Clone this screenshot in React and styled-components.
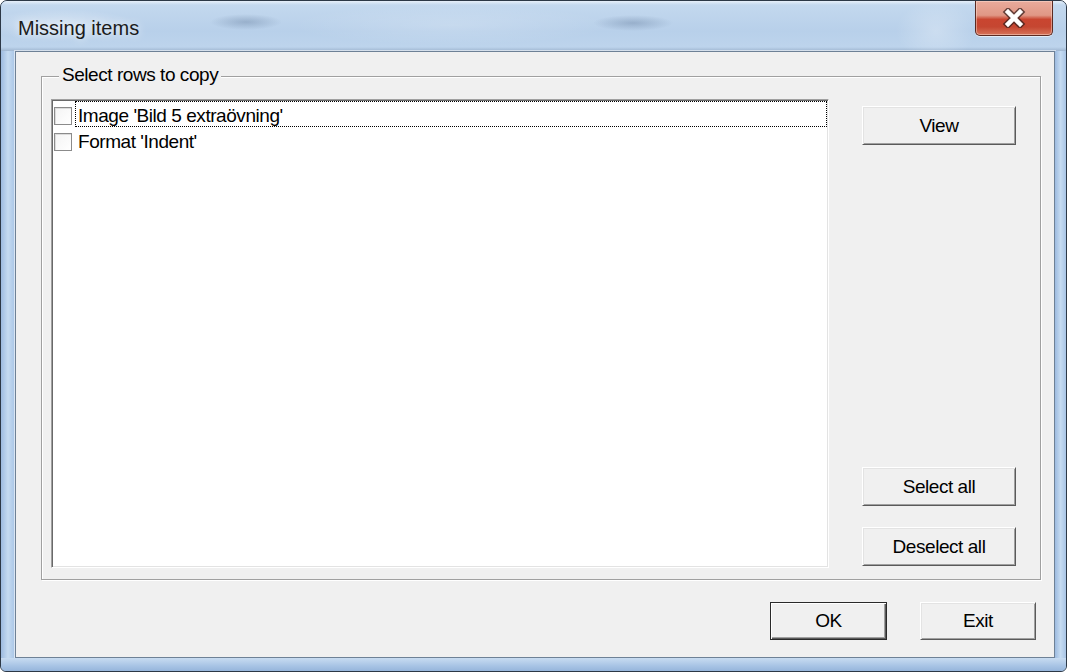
import styled, { createGlobalStyle } from 'styled-components'

const UI_FONT = `"Liberation Sans", Arial, sans-serif`

const GlobalStyle = createGlobalStyle`
  html, body {
    margin: 0;
    padding: 0;
    background: #ffffff;
  }
  body {
    width: 1067px;
    height: 672px;
    overflow: hidden;
  }
`

const Window = styled.div`
  box-sizing: border-box;
  width: 1067px;
  height: 672px;
  display: flex;
  flex-direction: column;
  border: 1px solid #2c3846;
  border-radius: 7px 7px 6px 6px;
  overflow: hidden;
  background: linear-gradient(90deg, #a4c1e3 0%, #bed5ee 45%, #b1cbe8 100%);
`

const TitleBar = styled.div`
  height: 50px;
  flex: none;
  display: flex;
  justify-content: space-between;
  align-items: flex-start;
  background:
    radial-gradient(ellipse 36px 8px at 245px 21px, rgba(70, 95, 130, 0.3), transparent),
    radial-gradient(ellipse 40px 8px at 632px 22px, rgba(70, 95, 130, 0.3), transparent),
    radial-gradient(ellipse 75px 16px at 60px 24px, rgba(255, 255, 255, 0.4), transparent),
    radial-gradient(ellipse 160px 20px at 450px 24px, rgba(255, 255, 255, 0.18), transparent),
    radial-gradient(ellipse 40px 30px at 935px 30px, rgba(255, 255, 255, 0.28), transparent),
    linear-gradient(180deg, #e6eff9 0px, #c3d8ee 4px, #b8d0ea 60%, #bdd4ec 92%, #9fb6d0 100%);
`

const Title = styled.div`
  padding: 15px 0 0 17px;
  font-family: "Liberation Sans", Arial, sans-serif;
  font-size: 20px;
  line-height: 24px;
  color: #1b1b1b;
  text-shadow: 0 0 8px rgba(255, 255, 255, 0.9);
`

const CloseButton = styled.div`
  box-sizing: border-box;
  width: 78px;
  height: 35px;
  margin-right: 13px;
  display: flex;
  align-items: center;
  justify-content: center;
  border: 1px solid #5b2a22;
  border-top: none;
  border-radius: 0 0 5px 5px;
  background: linear-gradient(180deg, #e9ab9c 0%, #e09785 42%, #c94530 54%, #c54631 76%, #d67359 100%);
  box-shadow: inset 0 0 0 1px rgba(255, 230, 220, 0.45), 0 1px 0 rgba(255, 255, 255, 0.6);
`

const Middle = styled.div`
  flex: 1;
  display: flex;
  min-height: 0;
`

const SideFrame = styled.div`
  flex: none;
  width: ${(p) => p.$width}px;
  background: linear-gradient(90deg, #9dbbe0 0%, #c5dbf1 50%, #a9c5e6 100%);
`

const BottomFrame = styled.div`
  flex: none;
  height: 13px;
  background: linear-gradient(180deg, #c8dcf1 0%, #a8c4e5 60%, #96b5db 100%);
`

const Client = styled.div`
  flex: 1;
  box-sizing: border-box;
  display: flex;
  flex-direction: column;
  padding: 24px 13px 17px 25px;
  background: #f0f0f0;
  border: 1px solid #6e8196;
  box-shadow: 0 0 0 1px rgba(255, 255, 255, 0.55);
  font-family: ${UI_FONT};
  font-size: 19px;
  letter-spacing: -0.45px;
  color: #000000;
`

const Group = styled.div`
  position: relative;
  flex: 1;
  min-height: 0;
  display: flex;
  gap: 33px;
  padding: 22px 24px 11px 9px;
  border: 1px solid #a0a0a0;
  box-shadow: inset 1px 1px 0 #ffffff, 1px 1px 0 #ffffff;
`

const Legend = styled.span`
  position: absolute;
  top: -14px;
  left: 17px;
  padding: 0 3px;
  background: #f0f0f0;
  line-height: 24px;
`

const ListBox = styled.div`
  flex: 1;
  padding: 1px;
  background: #ffffff;
  border: 1px solid;
  border-color: #a0a0a0 #ffffff #ffffff #a0a0a0;
  box-shadow: inset 1px 1px 0 #696969, inset -1px -1px 0 #e3e3e3;
`

const Row = styled.div`
  height: 26px;
  display: flex;
  align-items: center;
`

const Check = styled.span`
  box-sizing: border-box;
  flex: none;
  width: 18px;
  height: 18px;
  margin: 4px 0 0 1px;
  background: linear-gradient(135deg, #f4f4f4, #ffffff);
  border: 1px solid #8b8b8b;
  box-shadow: inset 1px 1px 0 #dcdcdc;
`

const ItemLabel = styled.span`
  box-sizing: border-box;
  flex: 1;
  height: 100%;
  margin-left: 3px;
  padding: 3px 0 0 2px;
  line-height: 22px;
  white-space: nowrap;
  border: 1px dotted ${(p) => (p.$focused ? '#000000' : 'transparent')};
`

const ButtonColumn = styled.div`
  flex: none;
  width: 154px;
  display: flex;
  flex-direction: column;
  padding: 7px 0 2px;
`

const Spacer = styled.div`
  flex: 1;
`

const Button = styled.div`
  box-sizing: border-box;
  flex: none;
  width: ${(p) => p.$width}px;
  height: ${(p) => p.$height}px;
  margin-top: ${(p) => p.$gap || 0}px;
  display: flex;
  align-items: center;
  justify-content: center;
  background: #f0f0f0;
  border: 1px solid;
  border-color: ${(p) => (p.$default ? '#2a2a2a' : '#ffffff #5a5a5a #5a5a5a #ffffff')};
  box-shadow: ${(p) =>
    p.$default
      ? 'inset 1px 1px 0 #ffffff, inset -1px -1px 0 #5a5a5a, inset -2px -2px 0 #a0a0a0'
      : 'inset 1px 1px 0 #e3e3e3, inset -1px -1px 0 #a0a0a0'};
  line-height: 24px;
`

const Footer = styled.div`
  flex: none;
  display: flex;
  justify-content: flex-end;
  gap: 33px;
  margin-top: 22px;
  padding-right: 5px;
`

function CloseGlyph() {
  return (
    <svg width="26" height="20" viewBox="0 0 26 20">
      <path d="M7 4 L19 16 M19 4 L7 16" stroke="#3d2320" strokeWidth="7.5" strokeLinecap="square" opacity="0.75" />
      <path d="M7 4 L19 16 M19 4 L7 16" stroke="#ffffff" strokeWidth="4.5" strokeLinecap="square" />
    </svg>
  )
}

const items = [
  { label: "Image 'Bild 5 extraövning'", focused: true },
  { label: "Format 'Indent'", focused: false },
]

export default function App() {
  return (
    <>
      <GlobalStyle />
      <Window>
        <TitleBar>
          <Title>Missing items</Title>
          <CloseButton>
            <CloseGlyph />
          </CloseButton>
        </TitleBar>
        <Middle>
          <SideFrame $width={14} />
          <Client>
            <Group>
              <Legend>Select rows to copy</Legend>
              <ListBox>
                {items.map((item) => (
                  <Row key={item.label}>
                    <Check />
                    <ItemLabel $focused={item.focused}>{item.label}</ItemLabel>
                  </Row>
                ))}
              </ListBox>
              <ButtonColumn>
                <Button $width={154} $height={39}>View</Button>
                <Spacer />
                <Button $width={154} $height={39}>Select all</Button>
                <Button $width={154} $height={39} $gap={21}>Deselect all</Button>
              </ButtonColumn>
            </Group>
            <Footer>
              <Button $width={117} $height={38} $default>OK</Button>
              <Button $width={116} $height={38}>Exit</Button>
            </Footer>
          </Client>
          <SideFrame $width={11} />
        </Middle>
        <BottomFrame />
      </Window>
    </>
  )
}
